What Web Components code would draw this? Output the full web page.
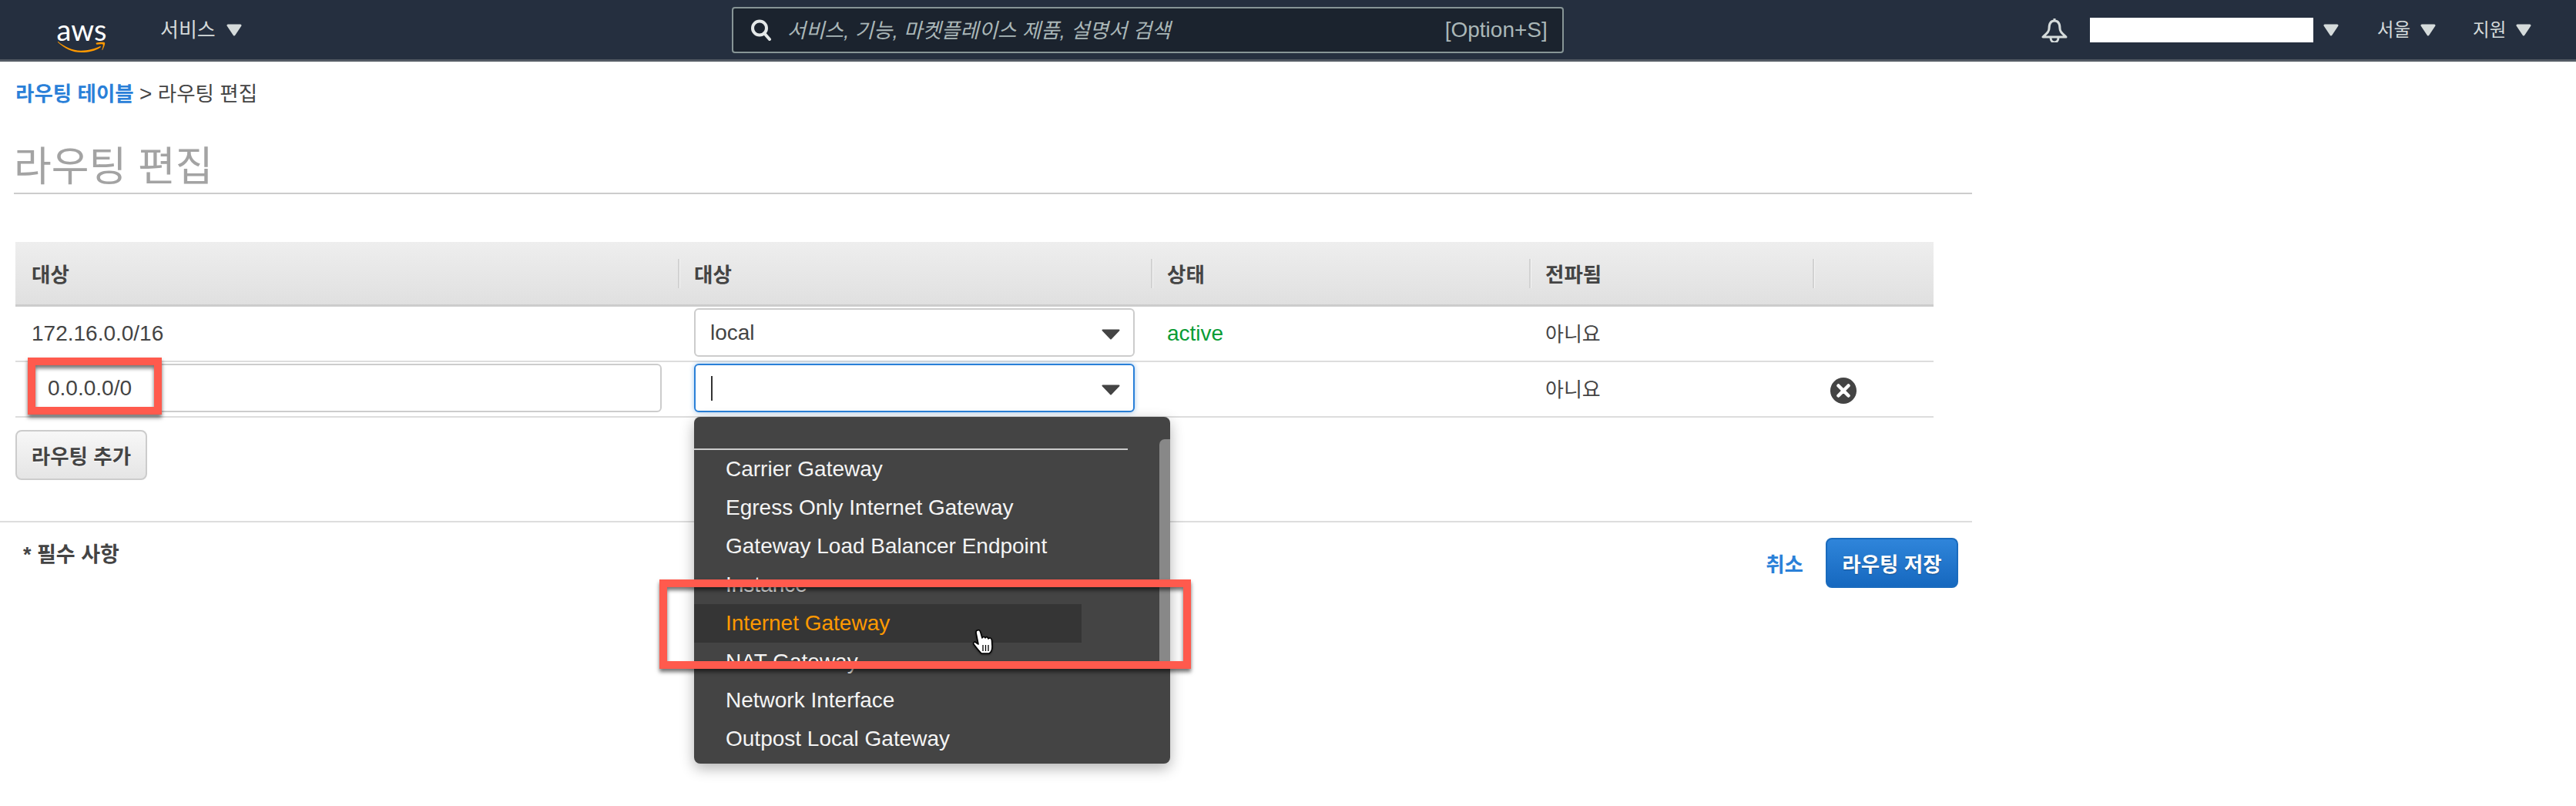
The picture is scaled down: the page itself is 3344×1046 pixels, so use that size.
<!DOCTYPE html>
<html lang="ko">
<head>
<meta charset="utf-8">
<title>라우팅 편집</title>
<style>
  html, body { margin: 0; padding: 0; background: #fff; }
  body {
    position: relative;
    height: 1046px;
    overflow: hidden;
    font-family: "Liberation Sans", "Noto Sans CJK KR", sans-serif;
    color: #444;
  }
</style>
</head>
<body>
<aws-nav></aws-nav>

<route-page>
  <page-crumb></page-crumb>
  <page-title>라우팅 편집</page-title>
  <route-table>
    <route-row head>
      <route-cell>대상</route-cell>
      <route-cell sep>대상</route-cell>
      <route-cell sep>상태</route-cell>
      <route-cell sep>전파됨</route-cell>
      <route-cell sep></route-cell>
    </route-row>
    <route-row>
      <route-cell>172.16.0.0/16</route-cell>
      <route-cell flush><select-box>local</select-box></route-cell>
      <route-cell style="color:#0a9c35">active</route-cell>
      <route-cell ko>아니요</route-cell>
      <route-cell></route-cell>
    </route-row>
    <route-row>
      <route-cell flush><text-field>0.0.0.0/0</text-field></route-cell>
      <route-cell flush>
        <select-box focused>
          <drop-menu slot="menu">
            <drop-option>Carrier Gateway</drop-option>
            <drop-option>Egress Only Internet Gateway</drop-option>
            <drop-option>Gateway Load Balancer Endpoint</drop-option>
            <drop-option>Instance</drop-option>
            <drop-option hover>Internet Gateway<hand-cursor></hand-cursor></drop-option>
            <drop-option>NAT Gateway</drop-option>
            <drop-option>Network Interface</drop-option>
            <drop-option>Outpost Local Gateway</drop-option>
          </drop-menu>
        </select-box>
      </route-cell>
      <route-cell></route-cell>
      <route-cell ko>아니요</route-cell>
      <route-cell><remove-icon></remove-icon></route-cell>
    </route-row>
  </route-table>
  <add-button>라우팅 추가</add-button>
  <form-footer></form-footer>
</route-page>

<mark-box style="left:36px;top:464px;width:174px;height:74px"></mark-box>
<mark-box style="left:856px;top:752px;width:690px;height:116px"></mark-box>

<script>
const caret = (w, h, color) => `<svg width="${w}" height="${h}" viewBox="0 0 20 16" style="display:block;flex:none">
  <path d="M2 2H18L10 14Z" fill="${color}" stroke="${color}" stroke-width="3" stroke-linejoin="round"/></svg>`;

class AwsNav extends HTMLElement {
  constructor() {
    super();
    this.attachShadow({ mode: 'open' });
  }
  connectedCallback() {
    this.shadowRoot.innerHTML = `
      <style>
        :host {
          display: flex;
          align-items: center;
          box-sizing: border-box;
          height: 80px;
          background: #252f3f;
          border-bottom: 3px solid #545b64;
          color: #d5dbdb;
          font-size: 26px;
        }
        .logo { width: 66px; height: 58px; margin-left: 73px; flex: none; display: flex; flex-direction: column; align-items: center; }
        .logo span { font: 38px/1 Lato, sans-serif; color: #fff; height: 26px; margin-top: 9px; }
        .logo svg { margin-top: 8px; display: block; }
        .menu { display: flex; align-items: center; gap: 14px; white-space: nowrap; }
        .menu span { margin-top: -4px; }
        .services { margin-left: 69px; margin-right: 636px; }
        .search {
          box-sizing: border-box;
          width: 1080px;
          height: 60px;
          display: flex;
          align-items: center;
          background: #1b232e;
          border: 2px solid #879596;
          border-radius: 4px;
          padding: 0 19px 0 22px;
          color: #aab7b8;
        }
        .search em { margin: -3px 0 0 20px; flex: 1; font-style: italic; font-size: 26.5px; }
        .search span { font-size: 28px; }
        .bell { margin-left: 620px; flex: none; display: block; }
        .account { width: 290px; height: 32px; background: #fff; margin-left: 29px; flex: none; }
        .acct-caret { margin-left: 13px; margin-right: 50px; }
        .region { margin-right: 48px; }
        .small { font-size: 23.5px; gap: 13px; }
      </style>
      <div class="logo">
        <span>aws</span>
        <svg width="66" height="16" viewBox="0 0 66 16">
          <path fill="#f90" d="M.5 1C9 8 20 13.5 32 13.5C42 13.5 51 11 58.5 7.5C59.5 7 60 8 59 9C52 14 42 16 33 16C20 16 9 10 .2 2C-.3 1.3 0 .6 .5 1Z"/>
          <path fill="#f90" d="M53 3C57 2 63 1.5 65 2.5C66 4 63.5 10 62 12.5C61.5 13 61 12.7 61.2 12C62 10 63 6 62.5 5C61.5 4 57 4.5 54 5C53 5 52.7 3.5 53 3Z"/>
        </svg>
      </div>
      <div class="menu services"><span>서비스</span> ${caret(20, 16, '#d5dbdb')}</div>
      <div class="search">
        <svg width="28" height="28" viewBox="0 0 28 28" style="flex:none">
          <circle cx="12" cy="11.500" r="9" fill="none" stroke="#e4e8e8" stroke-width="4"/>
          <path d="M18 18L25 26" stroke="#e4e8e8" stroke-width="4" stroke-linecap="round"/>
        </svg>
        <em>서비스, 기능, 마켓플레이스 제품, 설명서 검색</em>
        <span>[Option+S]</span>
      </div>
      <svg class="bell" width="34" height="32" viewBox="0 0 34 32">
        <path d="M17 1V4M17 4C11 4 10 9 10 14C10 19 6 21 2 25H32C28 21 24 19 24 14C24 9 23 4 17 4Z" fill="none" stroke="#d5dbdb" stroke-width="3" stroke-linejoin="round"/>
        <path d="M12 25.500C12 34 22 34 22 25.500" fill="none" stroke="#d5dbdb" stroke-width="3"/>
      </svg>
      <div class="account"></div>
      <div class="menu acct-caret">${caret(20, 16, '#d5dbdb')}</div>
      <div class="menu small region"><span>서울</span> ${caret(20, 16, '#d5dbdb')}</div>
      <div class="menu small"><span>지원</span> ${caret(20, 16, '#d5dbdb')}</div>
    `;
  }
}

class RoutePage extends HTMLElement {
  constructor() {
    super();
    this.attachShadow({ mode: 'open' });
  }
  connectedCallback() {
    this.shadowRoot.innerHTML = `
      <style>
        :host { display: flex; flex-direction: column; align-items: flex-start; width: 2560px; }
      </style>
      <slot></slot>
    `;
  }
}

class PageCrumb extends HTMLElement {
  constructor() {
    super();
    this.attachShadow({ mode: 'open' });
  }
  connectedCallback() {
    this.shadowRoot.innerHTML = `
      <style>
        :host { display: block; margin: 25px 0 0 20px; height: 34px; font-size: 26.5px; line-height: 34px; color: #444; white-space: nowrap; }
        a { color: #2a80d8; font-weight: 700; text-decoration: none; }
      </style>
      <a>라우팅 테이블</a> <span style="font-size:28px">&gt;</span> 라우팅 편집
    `;
  }
}

class PageTitle extends HTMLElement {
  constructor() {
    super();
    this.attachShadow({ mode: 'open' });
  }
  connectedCallback() {
    this.shadowRoot.innerHTML = `
      <style>
        :host {
          display: block;
          box-sizing: border-box;
          width: 2542px;
          margin: 19px 0 0 18px;
          height: 94px;
          padding-top: 27px;
          border-bottom: 2px solid #ccc;
          font-size: 53px;
          line-height: 64px;
          color: #a3a3a3;
        }
      </style>
      <slot></slot>
    `;
  }
}

class RouteTable extends HTMLElement {
  constructor() {
    super();
    this.attachShadow({ mode: 'open' });
  }
  connectedCallback() {
    this.shadowRoot.innerHTML = `
      <style>
        :host {
          display: block;
          width: 2490px;
          margin: 62px 0 0 20px;
          --cols: 860px 614px 491px 368px 157px;
        }
      </style>
      <slot></slot>
    `;
  }
}

class RouteRow extends HTMLElement {
  constructor() {
    super();
    this.attachShadow({ mode: 'open' });
  }
  connectedCallback() {
    this.shadowRoot.innerHTML = `
      <style>
        :host {
          display: grid;
          box-sizing: border-box;
          grid-template-columns: var(--cols);
          height: 72px;
          border-bottom: 2px solid #ddd;
          align-items: center;
          font-size: 28px;
          color: #444;
        }
        :host([head]) {
          height: 84px;
          border-bottom: 3px solid #ccc;
          background: linear-gradient(#eee, #e0e0e0);
          font-size: 26.5px;
          font-weight: 700;
        }
      </style>
      <slot></slot>
    `;
  }
}

class RouteCell extends HTMLElement {
  constructor() {
    super();
    this.attachShadow({ mode: 'open' });
  }
  connectedCallback() {
    this.shadowRoot.innerHTML = `
      <style>
        :host { display: flex; align-items: center; box-sizing: border-box; padding-left: 21px; white-space: nowrap; min-width: 0; }
        :host([flush]) { padding-right: 21px; }
        :host([ko]) { font-size: 26px; padding-bottom: 4px; }
        :host([sep]) { height: 38px; box-shadow: inset 2px 0 0 #d2d2d2, inset 3px 0 0 #f4f4f4; padding-left: 21px; }
      </style>
      <slot></slot>
    `;
  }
}

class SelectBox extends HTMLElement {
  constructor() {
    super();
    this.attachShadow({ mode: 'open' });
  }
  connectedCallback() {
    const focused = this.hasAttribute('focused');
    this.shadowRoot.innerHTML = `
      <style>
        :host { display: block; position: relative; width: 100%; margin: 2px 0 5px; }
        .box {
          box-sizing: border-box;
          height: 63px;
          display: flex;
          align-items: center;
          justify-content: space-between;
          padding: 0 17px 0 19px;
          background: #fff;
          border: 2px solid #ccc;
          border-radius: 6px;
        }
        :host([focused]) .box { border-color: #2a80d8; box-shadow: 0 0 6px rgba(42,128,216,.45); }
        .cursor { width: 1.5px; height: 32px; margin-left: 1px; background: #333; }
        svg { display: block; flex: none; margin-top: 4px; }
      </style>
      <div class="box">
        <span>${focused ? '<div class="cursor"></div>' : '<slot></slot>'}</span>
        <svg width="24" height="14" viewBox="0 0 24 14">
          <path d="M1.500 1.500H22.500L12 12.500Z" fill="#444" stroke="#444" stroke-width="2" stroke-linejoin="round"/>
        </svg>
      </div>
      <slot name="menu"></slot>
    `;
  }
}

class TextField extends HTMLElement {
  constructor() {
    super();
    this.attachShadow({ mode: 'open' });
  }
  connectedCallback() {
    this.shadowRoot.innerHTML = `
      <style>
        :host {
          display: flex;
          align-items: center;
          box-sizing: border-box;
          width: 818px;
          height: 63px;
          margin: 2px 0 5px;
          padding-left: 19px;
          background: #fff;
          border: 2px solid #ccc;
          border-radius: 6px;
          font-size: 28px;
        }
      </style>
      <slot></slot>
    `;
  }
}

class DropMenu extends HTMLElement {
  constructor() {
    super();
    this.attachShadow({ mode: 'open' });
  }
  connectedCallback() {
    this.shadowRoot.innerHTML = `
      <style>
        :host {
          display: block;
          position: absolute;
          z-index: 5;
          left: 0;
          top: 69px;
          width: 618px;
          box-sizing: border-box;
          padding-bottom: 7px;
          background: #444;
          border-radius: 8px;
          box-shadow: 0 6px 18px rgba(0,0,0,.3);
          color: #f4f4f4;
        }
        .blank { height: 41px; border-bottom: 2px solid #ccc; width: 563px; }
        .bar { position: absolute; right: 0; top: 29px; width: 14px; height: 294px; background: #888; border-radius: 7px 0 0 0; }
      </style>
      <div class="blank"></div>
      <slot></slot>
      <div class="bar"></div>
    `;
  }
}

class DropOption extends HTMLElement {
  constructor() {
    super();
    this.attachShadow({ mode: 'open' });
  }
  connectedCallback() {
    this.shadowRoot.innerHTML = `
      <style>
        :host {
          display: flex;
          align-items: center;
          position: relative;
          box-sizing: border-box;
          width: 503px;
          height: 50px;
          padding-left: 41px;
          white-space: nowrap;
        }
        :host([hover]) { background: #353535; color: #f90; }
      </style>
      <slot></slot>
    `;
  }
}

class HandCursor extends HTMLElement {
  constructor() {
    super();
    this.attachShadow({ mode: 'open' });
  }
  connectedCallback() {
    this.shadowRoot.innerHTML = `
      <style>
        :host { display: block; position: absolute; left: 361px; top: 33px; width: 30px; height: 32px; }
        svg { display: block; filter: drop-shadow(0 1px 1px rgba(0,0,0,.5)); }
      </style>
      <svg width="30" height="32" viewBox="0 0 30 32">
        <path d="M7 1C9 0 10 1 11 4L13 11C14 9 16 9 17 11C18 9 20 9 21 12C23 10 25 11 25.500 14L26 22C26 27 24 30 22 31H12C9 28 5 23 2 19C1 17 3 15 5 17L8 19L5 4C5 2 6 1 7 1Z" fill="#fff" stroke="#000" stroke-width="1.600" stroke-linejoin="round"/>
        <path d="M14 20V28M17.500 20V28M21 20V28" stroke="#000" stroke-width="1.300"/>
      </svg>
    `;
  }
}

class RemoveIcon extends HTMLElement {
  constructor() {
    super();
    this.attachShadow({ mode: 'open' });
  }
  connectedCallback() {
    this.shadowRoot.innerHTML = `
      <style>
        :host { display: block; margin: 4px 0 0 2px; width: 34px; height: 34px; }
        svg { display: block; }
      </style>
      <svg width="34" height="34" viewBox="0 0 34 34">
        <circle cx="17" cy="17" r="17" fill="#444"/>
        <path d="M10.500 10.500L23.500 23.500M23.500 10.500L10.500 23.500" stroke="#fff" stroke-width="4.500" stroke-linecap="round"/>
      </svg>
    `;
  }
}

class AddButton extends HTMLElement {
  constructor() {
    super();
    this.attachShadow({ mode: 'open' });
  }
  connectedCallback() {
    this.shadowRoot.innerHTML = `
      <style>
        :host {
          display: flex;
          align-items: center;
          justify-content: center;
          box-sizing: border-box;
          width: 171px;
          height: 65px;
          margin: 16px 0 53px 20px;
          background: linear-gradient(#f7f7f7, #e5e5e5);
          border: 2px solid #ccc;
          border-radius: 8px;
          color: #444;
          font-size: 26.5px;
          font-weight: 700;
          text-shadow: 0 1px 0 #fff;
          white-space: nowrap;
        }
      </style>
      <slot></slot>
    `;
  }
}

class FormFooter extends HTMLElement {
  constructor() {
    super();
    this.attachShadow({ mode: 'open' });
  }
  connectedCallback() {
    this.shadowRoot.innerHTML = `
      <style>
        :host {
          display: flex;
          justify-content: space-between;
          align-items: flex-start;
          box-sizing: border-box;
          width: 2560px;
          padding: 20px 18px 0 30px;
          border-top: 2px solid #ddd;
          font-size: 26.5px;
          font-weight: 700;
          color: #444;
        }
        .req { line-height: 44px; font-size: 27px; }
        .actions { display: flex; align-items: center; gap: 29px; }
        a { color: #2a80d8; text-decoration: none; }
        .save {
          box-sizing: border-box;
          width: 172px;
          height: 65px;
          display: flex;
          align-items: center;
          justify-content: center;
          background: linear-gradient(#2f85da, #1668bf);
          border: 2px solid #1a6bbd;
          border-radius: 8px;
          color: #fff;
          text-shadow: 0 1px 1px rgba(0,0,0,.35);
        }
      </style>
      <div class="req">* 필수 사항</div>
      <div class="actions"><a>취소</a><div class="save">라우팅 저장</div></div>
    `;
  }
}

class MarkBox extends HTMLElement {
  constructor() {
    super();
    this.attachShadow({ mode: 'open' });
  }
  connectedCallback() {
    this.shadowRoot.innerHTML = `
      <style>
        :host {
          display: block;
          position: absolute;
          z-index: 10;
          box-sizing: border-box;
          border: 10px solid #ff5a4d;
          box-shadow: 0 4px 5px rgba(0,0,0,.55), inset 0 4px 5px rgba(0,0,0,.55);
        }
      </style>
    `;
  }
}

customElements.define('aws-nav', AwsNav);
customElements.define('route-page', RoutePage);
customElements.define('page-crumb', PageCrumb);
customElements.define('page-title', PageTitle);
customElements.define('route-table', RouteTable);
customElements.define('route-row', RouteRow);
customElements.define('route-cell', RouteCell);
customElements.define('select-box', SelectBox);
customElements.define('text-field', TextField);
customElements.define('drop-menu', DropMenu);
customElements.define('drop-option', DropOption);
customElements.define('hand-cursor', HandCursor);
customElements.define('remove-icon', RemoveIcon);
customElements.define('add-button', AddButton);
customElements.define('form-footer', FormFooter);
customElements.define('mark-box', MarkBox);
</script>
</body>
</html>
